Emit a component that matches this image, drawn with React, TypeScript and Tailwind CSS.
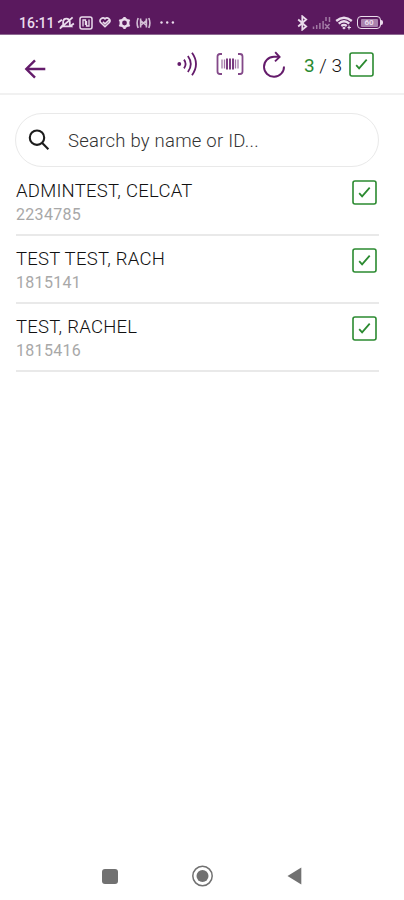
import { useState } from 'react';

interface Student {
  id: string;
  name: string;
}

const students: Student[] = [
  { id: '2234785', name: 'ADMINTEST, CELCAT' },
  { id: '1815141', name: 'TEST TEST, RACH' },
  { id: '1815416', name: 'TEST, RACHEL' }
];

const CheckBox = () => (
  <svg width="25" height="25" viewBox="0 0 25 25" fill="none" stroke="#2b8a30" className="block shrink-0">
    <rect x="1" y="1" width="23" height="23" rx="2" strokeWidth="1.6" />
    <path d="M7.2 13.2l2.9 3.1 7.6-8.6" strokeWidth="1.8" />
  </svg>
);

const StatusBar = () => (
  <div className="flex h-[35px] items-center border-b border-[#8d6a91] bg-[#5a195e] pt-[11px] pl-[19px] text-[#eadcec]">
    <span className="w-[38px] text-[14px] leading-none font-medium">16:11</span>

    {/* Muted bell */}
    <svg width="18" height="16" viewBox="0 0 19 16" fill="none" stroke="currentColor" strokeWidth="1.9">
      <path d="M5 11.5l1.5-1.7V7c0-4.8 7-4.8 7 0v2.8l1.5 1.7zM3 14L16.5 2M1.2 7.5l4-3M14 11.5l3.8-3" />
    </svg>

    {/* NFC */}
    <svg width="14" height="14" viewBox="0 0 14 14" fill="none" stroke="currentColor" className="ml-[4px]">
      <rect x="1" y="1" width="12" height="12" rx="2" strokeWidth="1.5" />
      <path d="M4 10.5V4h2.5v5M10 3.5V10H7.5V5" strokeWidth="1.3" />
    </svg>

    {/* Heart */}
    <svg width="12" height="11" viewBox="0 0 12 11" fill="none" stroke="currentColor" strokeWidth="1.6" className="ml-[6px]">
      <path d="M6 9.7L1.4 5.2C-.1 2.8 3.5-.6 6 1.9c2.5-2.5 6.1.9 4.6 3.3zM3.9 4.8L6 6.8l4-3.6" />
    </svg>

    {/* Gear */}
    <svg width="13" height="14" viewBox="0 0 13 14" fill="none" stroke="currentColor" className="ml-[7px]">
      <circle cx="6.5" cy="7" r="3.7" strokeWidth="2.6" />
      <path d="M6.5 1v2M6.5 11v2M1.3 4l1.8 1M9.9 9l1.8 1M1.3 10l1.8-1M9.9 5l1.8-1" strokeWidth="2.4" />
    </svg>

    {/* Broadcast */}
    <svg width="15" height="12" viewBox="0 0 15 12" fill="none" stroke="currentColor" strokeWidth="1.6" className="ml-[5px] opacity-85">
      <path d="M2.2 1Q0 6 2.2 11M12.8 1Q15 6 12.8 11M4.6 1.5v9M10.4 1.5v9M4.6 3.5l5.8 5M4.6 8.5l5.8-5" />
    </svg>

    <svg width="15" height="3" viewBox="0 0 15 3" fill="currentColor" className="ml-[9px]">
      <circle cx="1.5" cy="1.5" r="1.2" />
      <circle cx="7.2" cy="1.5" r="1.2" />
      <circle cx="12.9" cy="1.5" r="1.2" />
    </svg>

    {/* Bluetooth */}
    <svg width="11" height="16" viewBox="0 0 11 16" fill="none" stroke="currentColor" strokeWidth="1.8" className="ml-auto">
      <path d="M1.2 4.5l8 7L5.3 14.7V1.3l3.9 3.2-8 7" />
    </svg>

    {/* Mobile signal, no service */}
    <svg width="19" height="14" viewBox="0 0 19 14" fill="none" stroke="currentColor" strokeWidth="1.5" className="ml-[4px] opacity-50">
      <path d="M1.5 10.5V13M4.7 9v4M7.9 7v6M11.1 5v8M13 8l4.5 5M17.5 8L13 13M14 1v4M17.5 1v5" />
    </svg>

    {/* Wifi */}
    <svg width="18" height="14" viewBox="0 0 18 14" fill="none" stroke="currentColor" strokeWidth="2.3" className="ml-[4px]">
      <path d="M1.2 5Q9-1.5 16.8 5M3.7 7.6Q9 3 14.3 7.6M6.3 10Q9 7.8 11.7 10" />
      <path d="M9 10.4L10.8 12 9 13.4 7.2 12z" fill="currentColor" stroke="none" />
      <path d="M14 9.5v4M12.5 11.5h3.5" strokeWidth="1.2" />
    </svg>

    {/* Battery */}
    <div className="mr-[21px] ml-[4px] flex items-center">
      <div className="flex h-[13px] w-[24px] items-center justify-center rounded-[4px] border-[1.5px] border-current">
        <span className="flex h-[8px] w-[17px] items-center justify-center rounded-[1px] bg-[#a982ad] text-[8px] leading-none font-bold">60</span>
      </div>
      <div className="h-[5px] w-[2px] rounded-r-sm bg-current" />
    </div>
  </div>
);

const Header = () => (
  <header className="flex h-[60px] items-start border-b-2 border-[#f1f1f1] pl-[24px] text-[#641b6b]">
    <button aria-label="Back" className="mt-[24px]">
      <svg width="22" height="20" viewBox="0 0 22 20" fill="none" stroke="currentColor" strokeWidth="2.4" className="block">
        <path d="M21.3 10H3M11 1.3L2.3 10l8.7 8.7" />
      </svg>
    </button>

    {/* Contactless */}
    <svg width="22" height="26" viewBox="0 0 22 26" fill="none" stroke="currentColor" strokeWidth="1.8" className="mt-[16px] ml-[131px]">
      <circle cx="2.3" cy="13" r="1.9" fill="currentColor" stroke="none" />
      <path d="M7 8.6q3.2 4.4 0 8.8M10.9 5q5.8 8 0 16M15 1.8q8 11.2 0 22.4" />
    </svg>

    {/* Barcode */}
    <svg width="28" height="22" viewBox="0 0 28 22" fill="none" stroke="currentColor" className="mt-[18px] ml-[17px]">
      <path d="M6 1H4Q1.5 1 1.5 3.5v15Q1.5 21 4 21h2M22 1h2q2.5 0 2.5 2.5v15Q26.5 21 24 21h-2" strokeWidth="1.8" opacity="0.8" />
      <path d="M6 6.5v9M22 6.5v9" strokeWidth="1.5" opacity="0.5" />
      <path d="M8.5 6.5v9M19.5 6.5v9" strokeWidth="1.3" opacity="0.6" />
      <path d="M11 5.5v11M14 5.5v11M17 5.5v11" strokeWidth="1.7" />
    </svg>

    {/* Refresh */}
    <svg width="24" height="27" viewBox="0 0 24 27" fill="none" stroke="currentColor" strokeWidth="1.9" className="mt-[16px] ml-[18px]">
      <path d="M22 15.5A10 10 0 1 1 12 5.8h5" />
      <path d="M13.2 1.2l4.4 4.8-4.6 4.4" />
    </svg>

    <span className="mt-[20px] ml-[18px] w-[45px] text-[19px] leading-[22px] font-light whitespace-nowrap text-[#111]">
      <span className="font-normal text-[#2b8a30]">3</span> / 3
    </span>
    <div className="mt-[17px]">
      <CheckBox />
    </div>
  </header>
);

const NavBar = () => (
  <nav className="mt-auto flex h-[48px] items-center pl-[102px] text-[#717171]">
    <div className="h-[15px] w-[16px] rounded-[3px] bg-current" />
    <svg width="23" height="22" viewBox="0 0 23 22" className="ml-[73px]">
      <circle cx="11.5" cy="11" r="9.7" fill="none" stroke="currentColor" strokeWidth="1.5" />
      <circle cx="11.5" cy="11" r="6" fill="currentColor" />
    </svg>
    <svg width="15" height="18" viewBox="0 0 15 18" className="ml-[73px]">
      <path d="M14.3.5v17L.5 9z" fill="currentColor" />
    </svg>
  </nav>
);

const App = () => {
  const [searchTerm, setSearchTerm] = useState('');

  const filteredStudents = students.filter(student =>
    student.name.toLowerCase().includes(searchTerm.toLowerCase()) ||
    student.id.includes(searchTerm)
  );

  return (
    <div className="flex h-[900px] w-[404px] flex-col overflow-hidden bg-white font-[Roboto,sans-serif]">
      <StatusBar />
      <Header />

      <main className="pt-[18px] pr-[25px] pl-[15px]">
        {/* Search Bar */}
        <label className="flex h-[54px] items-center rounded-full border border-[#e9e9e9] pl-[12px]">
          <svg width="22" height="22" viewBox="0 0 22 22" fill="none" stroke="#1c1c1c" strokeWidth="2.1" className="shrink-0">
            <circle cx="9" cy="8.7" r="7.2" />
            <path d="M14.2 14l6.2 6.2" />
          </svg>
          <input
            type="text"
            placeholder="Search by name or ID..."
            className="ml-[18px] w-[270px] pt-[3px] text-[18.5px] font-light tracking-[0.24px] text-[#222] outline-none placeholder:text-[#333]"
            value={searchTerm}
            onChange={(e) => setSearchTerm(e.target.value)}
          />
        </label>

        <ul className="pt-px pl-px">
          {filteredStudents.map(student => (
            <li key={student.id} className="flex h-[68px] items-start justify-between border-b-2 border-[#e9e9e9] pt-[12px] pr-[2px]">
              <div>
                <p className="text-[18.5px] leading-[22px] font-light tracking-[0.25px] whitespace-nowrap text-[#111]">{student.name}</p>
                <p className="mt-[3px] text-[16px] leading-[20px] tracking-[0.3px] text-[#a8a8a8]">{student.id}</p>
              </div>
              <CheckBox />
            </li>
          ))}
        </ul>
      </main>

      <NavBar />
    </div>
  );
};

export default App;
